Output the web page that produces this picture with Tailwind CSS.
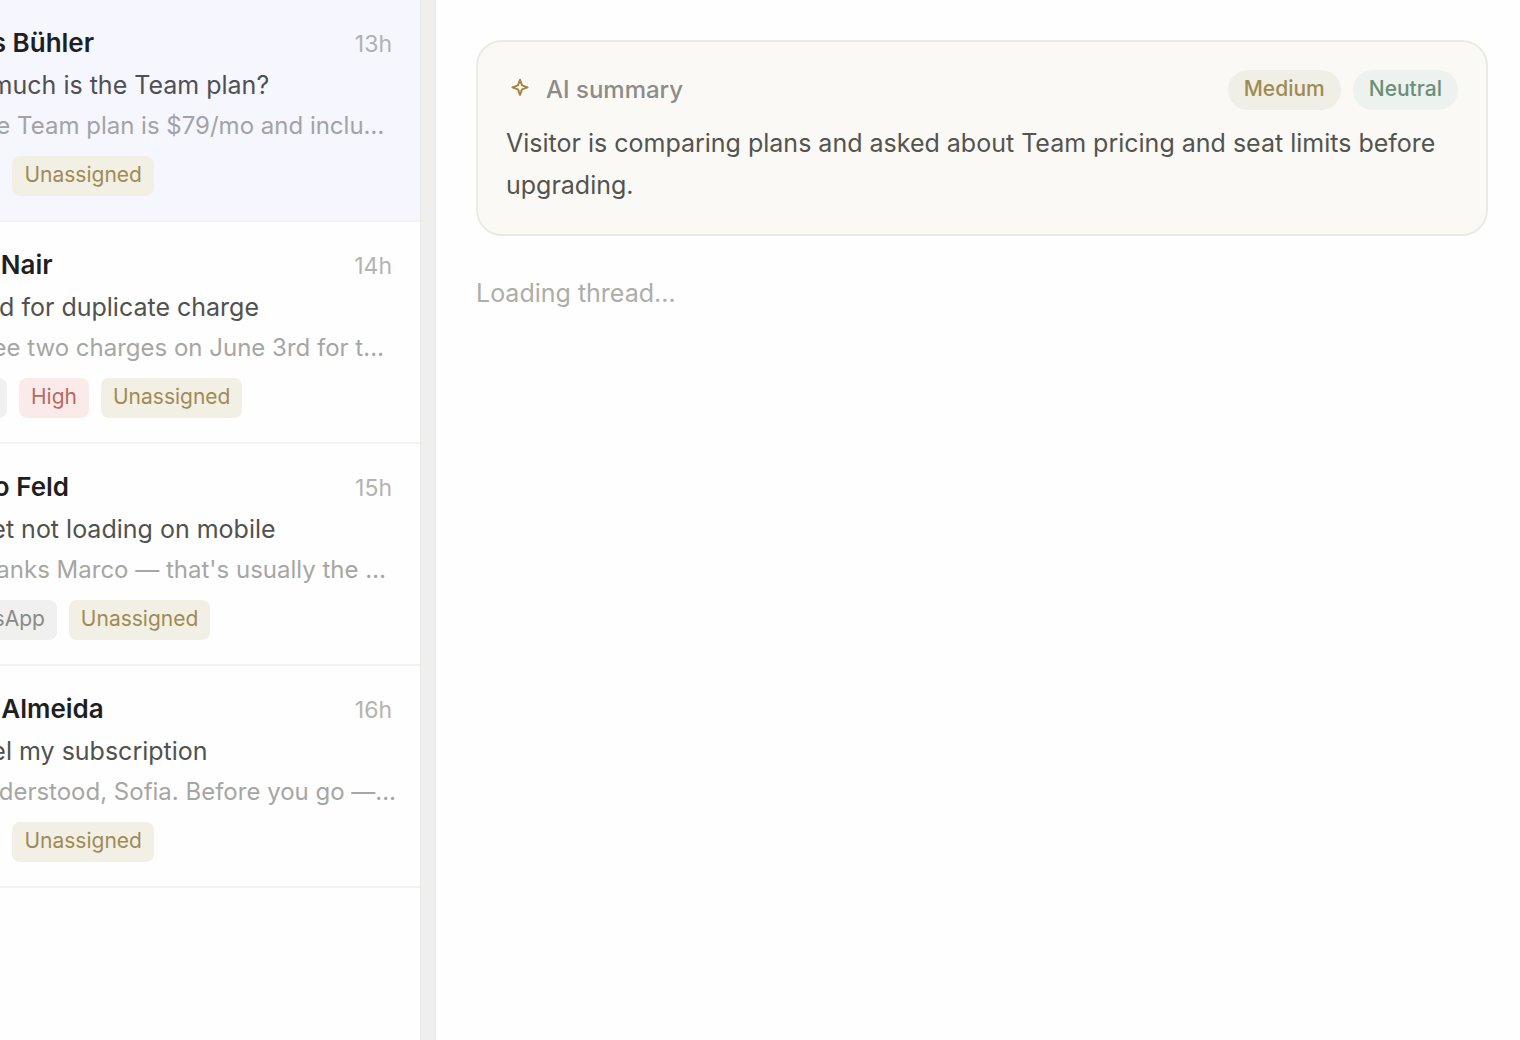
<!DOCTYPE html>
<html lang="en">
<head>
    <meta charset="UTF-8">
    <meta name="viewport" content="width=device-width, initial-scale=1.0">
    <script src="https://cdn.jsdelivr.net/npm/@tailwindcss/browser@4"></script>
    <title>Inbox</title>
</head>
<body class="bg-[#fefefe] font-['Inter','Liberation_Sans',sans-serif] antialiased">
    <div class="flex h-screen overflow-hidden">
        <!-- Conversation list -->
        <aside class="w-[421px] shrink-0 overflow-hidden border-r border-[#e9e9e7]">
            <ul class="-ml-[100px]">
                <li class="border-b-2 border-[#f3f3f2] bg-[#f5f6fe] pt-6 pb-6 pl-[30px] pr-7">
                    <div class="flex items-baseline justify-between leading-[38px]">
                        <h2 class="text-[26px] font-semibold text-[#1f1f22]">Jonas Bühler</h2>
                        <time class="text-[23px] text-[#b0b0b3]">13h</time>
                    </div>
                    <p class="mt-[3px] whitespace-nowrap text-[25px] leading-[38px] text-[#505054]">How much is the Team plan?</p>
                    <p class="mt-[3px] whitespace-nowrap text-[24px] leading-[38px] text-[#a3a3a6]">AI: The Team plan is $79/mo and inclu…</p>
                    <div class="mt-[11px] flex gap-3 text-[21px] leading-[38px]">
                        <span class="rounded-lg bg-[#f0f0ee] px-3 pb-[2px] text-[#8a8a87]">Chat</span>
                        <span class="rounded-lg bg-[#f2f0e5] px-3 pb-[2px] text-[#a08a55]">Unassigned</span>
                    </div>
                </li>
                <li class="border-b-2 border-[#f3f3f2] pt-6 pb-6 pl-[30px] pr-7">
                    <div class="flex items-baseline justify-between leading-[38px]">
                        <h2 class="text-[26px] font-semibold text-[#1f1f1f]">Priya Nair</h2>
                        <time class="text-[23px] text-[#b3b3b0]">14h</time>
                    </div>
                    <p class="mt-[3px] whitespace-nowrap text-[25px] leading-[38px] text-[#51514f]">Refund for duplicate charge</p>
                    <p class="mt-[3px] whitespace-nowrap text-[24px] leading-[38px] text-[#a6a6a3]">AI: I see two charges on June 3rd for t…</p>
                    <div class="mt-[11px] flex gap-3 text-[21px] leading-[38px]">
                        <span class="rounded-lg bg-[#f0f0ee] px-3 pb-[2px] text-[#8a8a87]">Email</span>
                        <span class="rounded-lg bg-[#fbeaea] px-3 pb-[2px] text-[#b9695c]">High</span>
                        <span class="rounded-lg bg-[#f2f0e5] px-3 pb-[2px] text-[#a08a55]">Unassigned</span>
                    </div>
                </li>
                <li class="border-b-2 border-[#f3f3f2] pt-6 pb-6 pl-[30px] pr-7">
                    <div class="flex items-baseline justify-between leading-[38px]">
                        <h2 class="text-[26px] font-semibold text-[#1f1f1f]">Marco Feld</h2>
                        <time class="text-[23px] text-[#b3b3b0]">15h</time>
                    </div>
                    <p class="mt-[3px] whitespace-nowrap text-[25px] leading-[38px] text-[#51514f]">Widget not loading on mobile</p>
                    <p class="mt-[3px] whitespace-nowrap text-[24px] leading-[38px] text-[#a6a6a3]">AI: Thanks Marco — that's usually the …</p>
                    <div class="mt-[11px] flex gap-3 text-[21px] leading-[38px]">
                        <span class="rounded-lg bg-[#f0f0ee] px-3 pb-[2px] text-[#8a8a87]">WhatsApp</span>
                        <span class="rounded-lg bg-[#f2f0e5] px-3 pb-[2px] text-[#a08a55]">Unassigned</span>
                    </div>
                </li>
                <li class="border-b-2 border-[#f3f3f2] pt-6 pb-6 pl-[30px] pr-7">
                    <div class="flex items-baseline justify-between leading-[38px]">
                        <h2 class="text-[26px] font-semibold text-[#1f1f1f]">Sofia Almeida</h2>
                        <time class="text-[23px] text-[#b3b3b0]">16h</time>
                    </div>
                    <p class="mt-[3px] whitespace-nowrap text-[25px] leading-[38px] text-[#51514f]">Cancel my subscription</p>
                    <p class="mt-[3px] whitespace-nowrap text-[24px] leading-[38px] text-[#a6a6a3]">AI: Understood, Sofia. Before you go —…</p>
                    <div class="mt-[11px] flex gap-3 text-[21px] leading-[38px]">
                        <span class="rounded-lg bg-[#f0f0ee] px-3 pb-[2px] text-[#8a8a87]">Chat</span>
                        <span class="rounded-lg bg-[#f2f0e5] px-3 pb-[2px] text-[#a08a55]">Unassigned</span>
                    </div>
                </li>
            </ul>
        </aside>

        <!-- Resize handle -->
        <div class="w-[15px] shrink-0 border-r border-[#e6e6e3] bg-[#efefed]"></div>

        <!-- Thread -->
        <main class="min-w-0 flex-1 pt-10 pr-8 pl-10">
            <section class="rounded-[26px] border-2 border-[#ebebe5] bg-[#faf9f5] p-7">
                <div class="flex items-center gap-3">
                    <svg class="h-7 w-7 shrink-0 text-[#a08747]" viewBox="0 0 28 28" fill="none" stroke="currentColor" stroke-width="2" stroke-linejoin="round">
                        <path d="M14 3.8 L16 9.4 L21.6 11.4 L16 13.4 L14 19 L12 13.4 L6.4 11.4 L12 9.4Z" />
                    </svg>
                    <h3 class="flex-1 text-[24px] leading-10 font-medium text-[#8c8c88]">AI summary</h3>
                    <span class="rounded-full bg-[#f0efe7] px-4 pb-[2px] text-[21px] leading-[38px] font-medium text-[#a08a50]">Medium</span>
                    <span class="rounded-full bg-[#eef2ee] px-4 pb-[2px] text-[21px] leading-[38px] font-medium text-[#6b8f78]">Neutral</span>
                </div>
                <p class="mt-3 text-[25px] leading-[42px] text-[#535350]">Visitor is comparing plans and asked about Team pricing and seat limits before upgrading.</p>
            </section>
            <p class="mt-[37px] text-[25px] leading-10 text-[#adadaa]">Loading thread…</p>
        </main>
    </div>
</body>
</html>
